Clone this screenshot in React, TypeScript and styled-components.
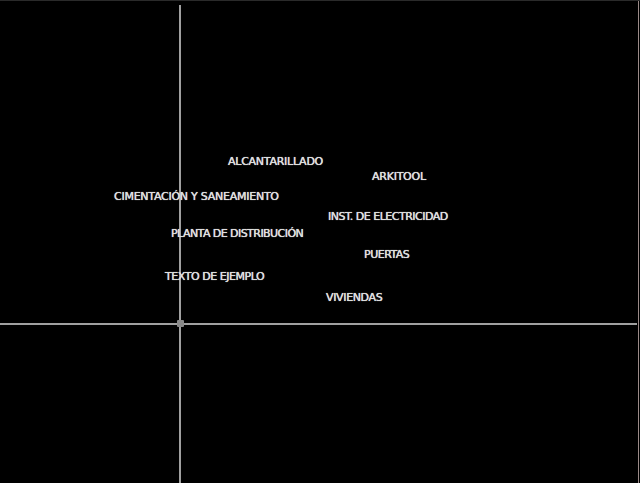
import React from "react";
import styled, { createGlobalStyle } from "styled-components";

const Global = createGlobalStyle`
  html, body { margin: 0; padding: 0; background: #000; }
  #root { width: 640px; height: 483px; }
`;

const Viewport = styled.div`
  position: relative;
  width: 640px;
  height: 483px;
  background: #000;
  overflow: hidden;
  border-top: 1px solid #2a2a2a;
  box-sizing: border-box;
  &::after {
    content: "";
    position: absolute;
    top: 0;
    right: 1px;
    width: 1px;
    height: 100%;
    background: #9a8a88;
  }
`;

const AxisV = styled.div`
  position: absolute;
  left: 179px;
  top: 4px;
  width: 2px;
  bottom: 0;
  background: #a0a0a0;
`;

const AxisH = styled.div`
  position: absolute;
  left: 0;
  top: 322px;
  width: 637px;
  height: 2px;
  background: #a0a0a0;
`;

const Origin = styled.div`
  position: absolute;
  left: 177px;
  top: 319px;
  width: 7px;
  height: 7px;
  background: #8a8a8a;
  border-radius: 1px;
`;

const Label = styled.span<{ $x: number; $y: number; $ls: number }>`
  position: absolute;
  left: ${(p) => p.$x}px;
  top: ${(p) => p.$y}px;
  color: #dedede;
  font-family: "DejaVu Sans", "Liberation Sans", sans-serif;
  font-size: 11px;
  line-height: 12px;
  letter-spacing: ${(p) => p.$ls}px;
  white-space: nowrap;
  text-shadow: 0 0 1px rgba(220, 220, 220, 0.8), 0 0 0.5px #ddd;
`;

const labels = [
  { t: "ALCANTARILLADO", x: 228, y: 155, ls: -0.25 },
  { t: "ARKITOOL", x: 372, y: 170, ls: -0.25 },
  { t: "CIMENTACIÓN Y SANEAMIENTO", x: 114, y: 190, ls: -0.25 },
  { t: "INST. DE ELECTRICIDAD", x: 328, y: 210, ls: -0.5 },
  { t: "PLANTA DE DISTRIBUCIÓN", x: 171, y: 227, ls: -0.55 },
  { t: "PUERTAS", x: 364, y: 248, ls: -0.5 },
  { t: "TEXTO DE EJEMPLO", x: 165, y: 270, ls: -0.45 },
  { t: "VIVIENDAS", x: 326, y: 291, ls: -0.35 },
];

export default function App() {
  return (
    <>
      <Global />
      <Viewport>
        <AxisV />
        <AxisH />
        <Origin />
        {labels.map((l) => (
          <Label key={l.t} $x={l.x} $y={l.y} $ls={l.ls}>
            {l.t}
          </Label>
        ))}
      </Viewport>
    </>
  );
}
